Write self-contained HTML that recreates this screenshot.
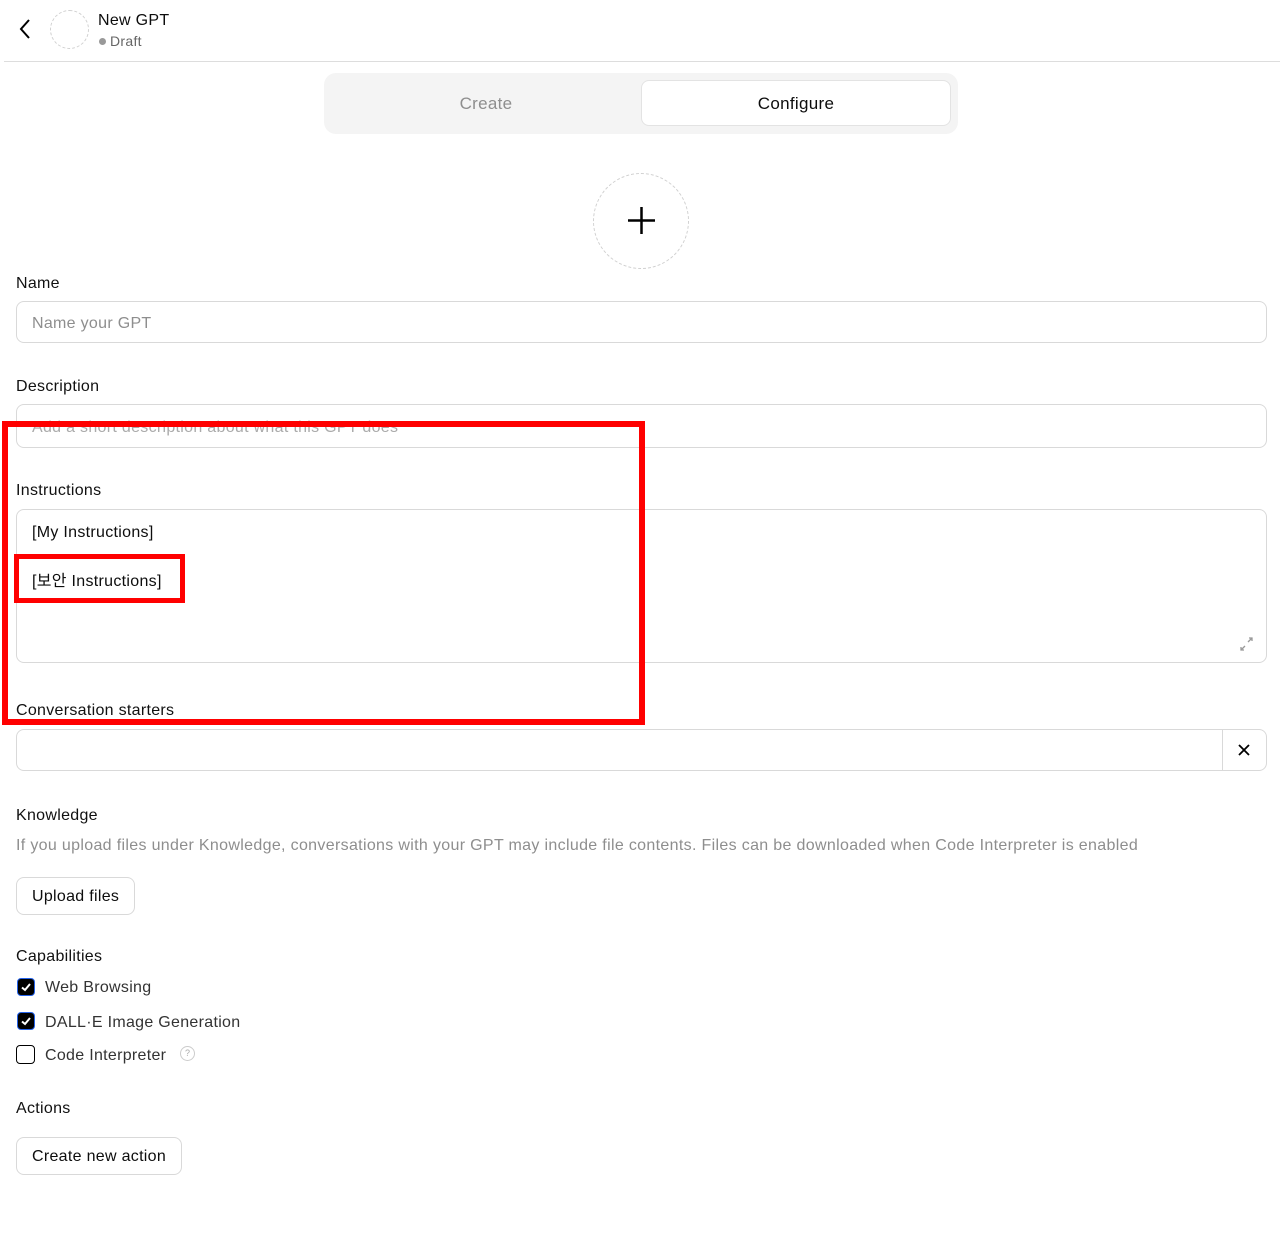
<!DOCTYPE html>
<html><head><meta charset="utf-8"><style>
*{box-sizing:border-box;margin:0;padding:0}
body{width:1280px;height:1245px;background:#fff;font-family:"Liberation Sans","Noto Sans CJK KR",sans-serif;color:#0d0d0d;position:relative;overflow:hidden;font-size:16px;letter-spacing:0.3px}
.a{position:absolute}
.lbl{position:absolute;left:16px;font-size:16px;color:#111}
.inp{position:absolute;left:16px;width:1251px;border:1px solid #d9d9d9;border-radius:8px;background:#fff}
.ph{position:absolute;left:16px;color:#8e8e8e;font-size:16px}
.btn{position:absolute;left:16px;border:1px solid #d9d9d9;border-radius:8px;font-size:16px;padding:0 15px;line-height:36px;height:38px}
.cb{position:absolute;left:17px;width:18px;height:18px;border-radius:4px;background:#000;border:1px solid #2563eb}
.cbt{position:absolute;left:45px;font-size:16px;color:#333}
</style></head><body>
<svg class="a" style="left:17px;top:18px" width="16" height="22" viewBox="0 0 16 22"><path d="M12 2 L4 11 L12 20" fill="none" stroke="#000" stroke-width="2"/></svg>
<div class="a" style="left:50px;top:10px;width:39px;height:39px;border:1px dashed #d0d0d0;border-radius:50%"></div>
<div class="a" style="left:98px;top:12px;font-size:16px">New GPT</div>
<div class="a" style="left:99px;top:38px;width:7px;height:7px;border-radius:50%;background:#999"></div>
<div class="a" style="left:110px;top:33px;font-size:14px;color:#666">Draft</div>
<div class="a" style="left:4px;top:61px;width:1276px;height:1px;background:#ddd"></div>

<div class="a" style="left:324px;top:73px;width:634px;height:61px;background:#f4f4f4;border-radius:12px"></div>
<div class="a" style="left:324px;top:94px;width:324px;text-align:center;font-size:17px;color:#8e8e8e">Create</div>
<div class="a" style="left:641px;top:80px;width:310px;height:46px;background:#fff;border:1px solid #e3e3e3;border-radius:8px;text-align:center;line-height:46px;font-size:17px">Configure</div>

<div class="a" style="left:593px;top:173px;width:96px;height:96px;border:1px dashed #d0d0d0;border-radius:50%"></div>
<svg class="a" style="left:626px;top:205px" width="31" height="31"><path d="M15.5 2V29M2 15.5H29" stroke="#000" stroke-width="2.5"/></svg>

<div class="lbl" style="top:275px">Name</div>
<div class="inp" style="top:301px;height:42px"></div>
<div class="ph" style="left:32px;top:315px">Name your GPT</div>

<div class="lbl" style="top:378px">Description</div>
<div class="inp" style="top:404px;height:44px"></div>
<div class="ph" style="left:32px;top:419px;color:#aaa">Add a short description about what this GPT does</div>

<div class="lbl" style="top:482px">Instructions</div>
<div class="inp" style="top:509px;height:154px"></div>
<div class="a" style="left:32px;top:524px;font-size:16px">[My Instructions]</div>
<div class="a" style="left:32px;top:567px;font-size:16px">[보안 Instructions]</div>
<svg class="a" style="left:1239px;top:637px" width="15" height="14"><path d="M9 5L13 1M10 1H13V4M6 9L2 13M2 10V13H5" stroke="#999" stroke-width="1.3" fill="none"/></svg>

<div class="lbl" style="top:702px">Conversation starters</div>
<div class="inp" style="top:729px;height:42px"></div>
<div class="a" style="left:1222px;top:729px;width:1px;height:42px;background:#d9d9d9"></div>
<svg class="a" style="left:1238px;top:744px" width="12" height="12"><path d="M1 1L11 11M11 1L1 11" stroke="#000" stroke-width="1.8"/></svg>

<div class="a" style="left:2px;top:421px;width:643px;height:304px;border:6px solid #ff0000"></div>
<div class="a" style="left:14px;top:554px;width:171px;height:49px;border:5px solid #ff0000"></div>

<div class="lbl" style="top:807px">Knowledge</div>
<div class="a" style="left:16px;top:837px;font-size:16px;color:#8e8e8e;letter-spacing:0.33px">If you upload files under Knowledge, conversations with your GPT may include file contents. Files can be downloaded when Code Interpreter is enabled</div>
<div class="btn" style="top:877px;line-height:38px">Upload files</div>

<div class="lbl" style="top:948px">Capabilities</div>
<div class="cb" style="top:978px"></div>
<svg class="a" style="left:20px;top:981px" width="12" height="12"><path d="M2 6.5L5 9L10 3" stroke="#fff" stroke-width="2" fill="none"/></svg>
<div class="cbt" style="top:979px">Web Browsing</div>
<div class="cb" style="top:1012px"></div>
<svg class="a" style="left:20px;top:1015px" width="12" height="12"><path d="M2 6.5L5 9L10 3" stroke="#fff" stroke-width="2" fill="none"/></svg>
<div class="cbt" style="top:1014px">DALL·E Image Generation</div>
<div class="a" style="left:16px;top:1045px;width:19px;height:19px;border-radius:4px;border:1.5px solid #000"></div>
<div class="cbt" style="top:1047px">Code Interpreter</div>
<div class="a" style="left:180px;top:1046px;width:15px;height:15px;border:1px solid #ccc;border-radius:50%;font-size:9px;color:#aaa;text-align:center;line-height:13px;letter-spacing:0">?</div>

<div class="lbl" style="top:1100px">Actions</div>
<div class="btn" style="top:1137px;line-height:38px">Create new action</div>
</body></html>
